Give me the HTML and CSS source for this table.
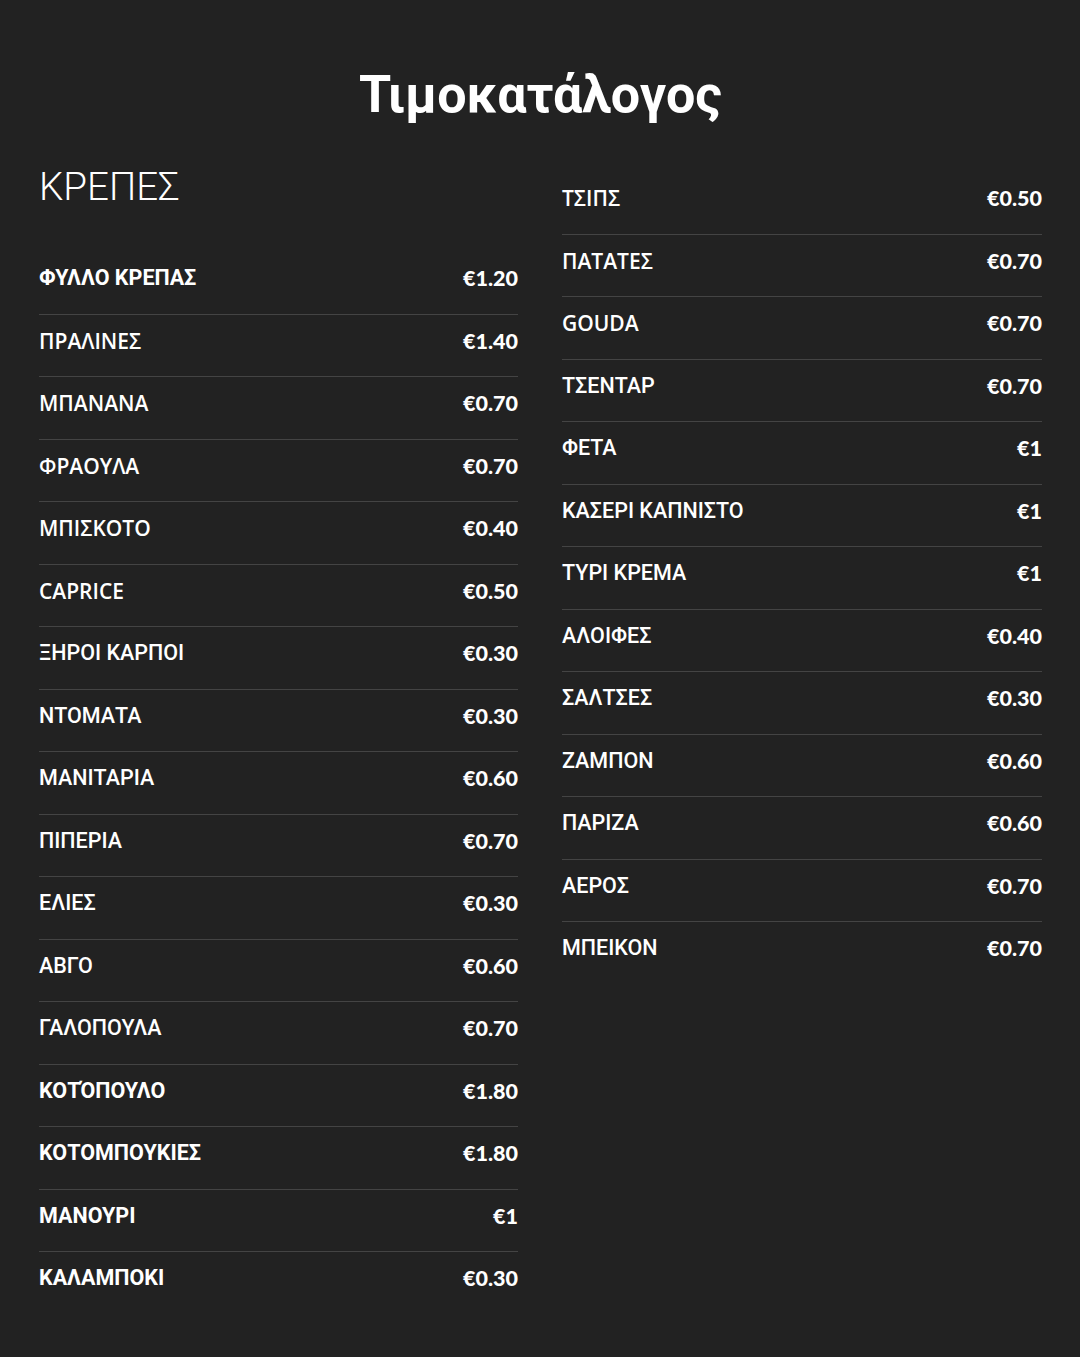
FILE: index.html
```html
<!DOCTYPE html>
<html lang="el">
<head>
<meta charset="utf-8">
<title>Τιμοκατάλογος</title>
<link rel="stylesheet" href="styles.css">
</head>
<body>
<main class="page">
  <h1 class="title">Τιμοκατάλογος</h1>
  <div class="columns">
    <section class="col">
      <h2 class="cat">ΚΡΕΠΕΣ</h2>
      <ul class="list">
        <li class="row b"><span class="name">ΦΥΛΛΟ ΚΡΕΠΑΣ</span><span class="price">€1.20</span></li>
        <li class="row h"><span class="name">ΠΡΑΛΙΝΕΣ</span><span class="price">€1.40</span></li>
        <li class="row h"><span class="name">ΜΠΑΝΑΝΑ</span><span class="price">€0.70</span></li>
        <li class="row h"><span class="name">ΦΡΑΟΥΛΑ</span><span class="price">€0.70</span></li>
        <li class="row h"><span class="name">ΜΠΙΣΚΟΤΟ</span><span class="price">€0.40</span></li>
        <li class="row h"><span class="name">CAPRICE</span><span class="price">€0.50</span></li>
        <li class="row"><span class="name">ΞΗΡΟΙ ΚΑΡΠΟΙ</span><span class="price">€0.30</span></li>
        <li class="row"><span class="name">ΝΤΟΜΑΤΑ</span><span class="price">€0.30</span></li>
        <li class="row"><span class="name">ΜΑΝΙΤΑΡΙΑ</span><span class="price">€0.60</span></li>
        <li class="row"><span class="name">ΠΙΠΕΡΙΑ</span><span class="price">€0.70</span></li>
        <li class="row"><span class="name">ΕΛΙΕΣ</span><span class="price">€0.30</span></li>
        <li class="row"><span class="name">ΑΒΓΟ</span><span class="price">€0.60</span></li>
        <li class="row"><span class="name">ΓΑΛΟΠΟΥΛΑ</span><span class="price">€0.70</span></li>
        <li class="row b"><span class="name">ΚΟΤΌΠΟΥΛΟ</span><span class="price">€1.80</span></li>
        <li class="row b"><span class="name">ΚΟΤΟΜΠΟΥΚΙΕΣ</span><span class="price">€1.80</span></li>
        <li class="row b"><span class="name">ΜΑΝΟΥΡΙ</span><span class="price">€1</span></li>
        <li class="row b"><span class="name">ΚΑΛΑΜΠΟΚΙ</span><span class="price">€0.30</span></li>
      </ul>
    </section>
    <section class="col col-right">
      <ul class="list">
        <li class="row h"><span class="name">ΤΣΙΠΣ</span><span class="price">€0.50</span></li>
        <li class="row h"><span class="name">ΠΑΤΑΤΕΣ</span><span class="price">€0.70</span></li>
        <li class="row h"><span class="name">GOUDA</span><span class="price">€0.70</span></li>
        <li class="row"><span class="name">ΤΣΕΝΤΑΡ</span><span class="price">€0.70</span></li>
        <li class="row"><span class="name">ΦΕΤΑ</span><span class="price">€1</span></li>
        <li class="row"><span class="name">ΚΑΣΕΡΙ ΚΑΠΝΙΣΤΟ</span><span class="price">€1</span></li>
        <li class="row"><span class="name">ΤΥΡΙ ΚΡΕΜΑ</span><span class="price">€1</span></li>
        <li class="row"><span class="name">ΑΛΟΙΦΕΣ</span><span class="price">€0.40</span></li>
        <li class="row"><span class="name">ΣΑΛΤΣΕΣ</span><span class="price">€0.30</span></li>
        <li class="row"><span class="name">ΖΑΜΠΟΝ</span><span class="price">€0.60</span></li>
        <li class="row"><span class="name">ΠΑΡΙΖΑ</span><span class="price">€0.60</span></li>
        <li class="row"><span class="name">ΑΕΡΟΣ</span><span class="price">€0.70</span></li>
        <li class="row"><span class="name">ΜΠΕΙΚΟΝ</span><span class="price">€0.70</span></li>
      </ul>
    </section>
  </div>
</main>
</body>
</html>
```

FILE: styles.css
```css
html, body {
  margin: 0;
  padding: 0;
  background: #222222;
  color: #ffffff;
}
body {
  font-family: Roboto, "Noto Sans", sans-serif;
}
.page {
  padding: 60px 38px 40px 39px;
}
.title {
  margin: 0 0 32px;
  text-align: center;
  font-family: Roboto, "Noto Sans", sans-serif;
  font-weight: 700;
  font-size: 52px;
  line-height: 70px;
}
.columns {
  display: grid;
  grid-template-columns: 479px 480px;
  column-gap: 44px;
  align-items: start;
}
.cat {
  margin: 0;
  font-family: Roboto, "Noto Sans", sans-serif;
  font-weight: 300;
  font-size: 38.5px;
  line-height: 50px;
  padding: 0 0 40px;
}
.col-right {
  padding-top: 10px;
}
.list {
  list-style: none;
  margin: 0;
  padding: 0;
}
.row {
  display: flex;
  justify-content: space-between;
  align-items: center;
  padding: 14px 0 23.5px;
  line-height: 24px;
  border-bottom: 1px solid #444444;
}
.row:last-child {
  border-bottom: none;
}
.name {
  font-family: Roboto, "Noto Sans", sans-serif;
  font-weight: 500;
  font-size: 21.5px;
}
.row.b .name {
  font-weight: 700;
}
.row.h .name {
  font-family: "Open Sans", "Noto Sans", sans-serif;
  font-weight: 600;
  font-size: 21px;
}
.price {
  font-family: Lato, "Open Sans", sans-serif;
  font-weight: 900;
  font-size: 21.5px;
}
```
